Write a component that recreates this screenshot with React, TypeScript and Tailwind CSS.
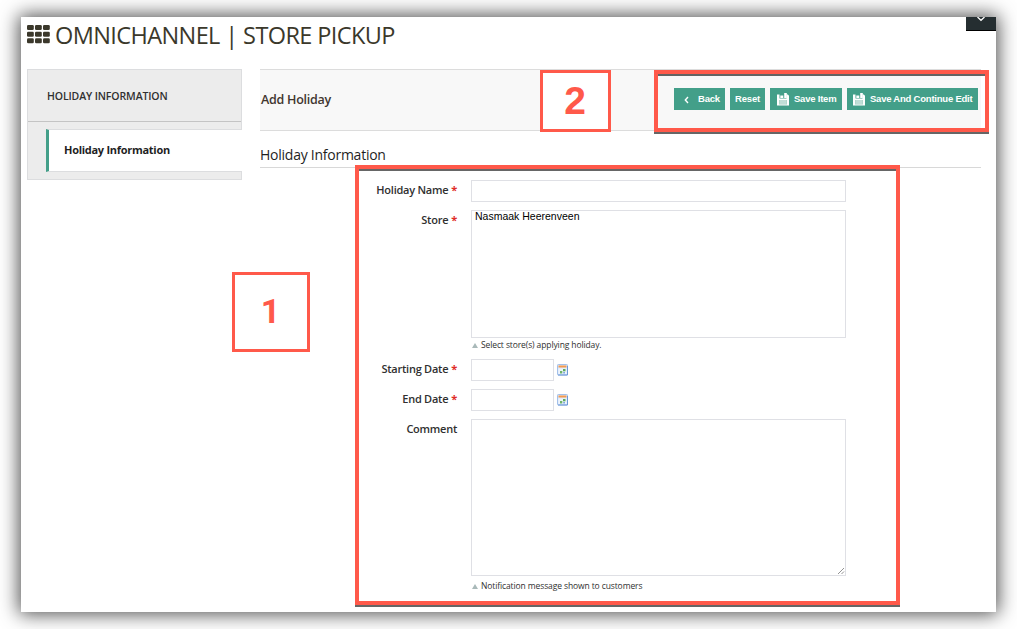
import type { ReactNode } from 'react';

function GridIcon() {
  const cols = [0, 8, 16];
  const rows = [0, 6.7, 13.3];
  return (
    <svg width="23" height="19" viewBox="0 0 23 19" fill="#3b382b">
      {rows.map((y) => cols.map((x) => <rect key={`${x}-${y}`} x={x} y={y} width="6.8" height="5" rx="1.3" />))}
    </svg>
  );
}

function SaveIcon() {
  return (
    <svg width="12" height="13" viewBox="0 0 12 13" className="mt-px shrink-0">
      <path d="M0 1.500h2.500v4h7v-4h1.300L12 2.700V12.500H0z" fill="#fff" />
      <path d="M3.300 2.500h3v2.500h-3zM7.200 0h2.600v5H7.200z" fill="#fff" />
      <path d="M2 7h8v4.500H2z" fill="#a3cfc3" />
      <path d="M2.500 8h7M2.500 10h7" stroke="#e4f2ee" strokeWidth=".9" />
    </svg>
  );
}

function CalendarIcon() {
  return (
    <svg width="11" height="12" viewBox="0 0 11 12" className="shrink-0">
      <rect x=".5" y=".5" width="10" height="10.500" rx=".8" fill="#dce8f8" stroke="#a3c0ea" />
      <path d="M1 11h9.500V2" stroke="#6c98d6" fill="none" />
      <rect x="1.500" y="1.500" width="8" height="2" fill="#f69a4d" />
      <rect x="1.500" y="4.500" width="8" height="5.500" fill="#eef4fc" />
      <rect x="3" y="7" width="2.300" height="2.500" fill="#6fb36b" />
      <rect x="6" y="5" width="2.500" height="2.300" fill="#5daa5d" />
      <rect x="6.200" y="8" width="1.800" height="1.500" fill="#7ea6dc" />
    </svg>
  );
}

function Button({ children, className }: { children: ReactNode; className: string }) {
  return (
    <button
      className={`flex h-[22px] shrink-0 items-center bg-[#439f89] font-['Liberation_Sans',sans-serif] text-[9.5px] font-bold whitespace-nowrap text-white ${className}`}
    >
      {children}
    </button>
  );
}

function Label({ children, required }: { children: ReactNode; required?: boolean }) {
  return (
    <div className="w-[197px] shrink-0 pt-[2px] text-right text-[11px] leading-[15px] font-semibold tracking-[-0.25px] text-[#303030]">
      {children}
      {required && <span className="ml-[3px] font-bold text-[#e02b27]">*</span>}
    </div>
  );
}

function Hint({ children }: { children: ReactNode }) {
  return (
    <div className="flex h-[13px] items-center pl-px text-[8.5px] tracking-[-0.11px] text-[#303030]">
      <svg width="6" height="5" viewBox="0 0 6 5" className="mr-[3px]">
        <path d="M3 0l3 5H0z" fill="#a9b9b9" />
      </svg>
      {children}
    </div>
  );
}

const field = 'border border-[#dfe0e5] bg-white';

export default function App() {
  return (
    <div className="h-[629px] w-[1017px] overflow-hidden bg-white px-[21px] pt-[17px] font-['Open_Sans',sans-serif]">
      <div className="relative h-[595px] w-[975px] bg-white shadow-[0_0_18px_2px_rgba(0,0,0,0.7)]">
        <header className="flex h-[52px] items-start pl-[6px]">
          <div className="pt-[8px]">
            <GridIcon />
          </div>
          <h1 className="ml-[5px] pt-[2px] text-[23.5px] leading-[32px] tracking-[-0.6px] whitespace-nowrap text-[#3b382b]">
            OMNICHANNEL | STORE PICKUP
          </h1>
          <div className="ml-auto flex h-[14px] w-[30px] justify-center border-b border-black bg-[#252e31]">
            <svg width="10" height="5" viewBox="0 0 10 5">
              <path d="M1.500 0L5 3.300 8.500 0" fill="none" stroke="#fff" strokeWidth="1.300" />
            </svg>
          </div>
        </header>

        <div className="flex items-start pl-[6px]">
          <aside className="h-[111px] w-[215px] border border-[#dcdddf] bg-[#ececec]">
            <h2 className="flex h-[52px] items-center border-b border-[#c4c4c4] pt-[2px] pl-[19px] text-[10.500px] font-semibold tracking-[-0.12px] text-[#303030]">
              HOLIDAY INFORMATION
            </h2>
            <div className="mt-[7px] -mr-px ml-[18px] flex h-[43px] items-center border-y border-l-[3px] border-y-[#dcdddf] border-l-[#439f89] bg-white pl-[15px] text-[11px] font-bold tracking-[-0.28px] text-[#1f1f1f]">
              Holiday Information
            </div>
          </aside>

          <main className="ml-[18px] w-[721px]">
            <div className="flex h-[62px] items-center border-y border-[#dcdcdc] bg-[#f8f8f8] pr-[3px] pl-[1px]">
              <span className="text-[12.500px] font-semibold tracking-[-0.25px] text-[#41362f]">Add Holiday</span>
              <div className="ml-auto flex gap-[5px] pb-[2px]">
                <Button className="w-[51px] pl-[10px]">
                  <svg width="5" height="8" viewBox="0 0 5 8" className="mt-px mr-[9px]">
                    <path d="M4 1L1.300 4 4 7" fill="none" stroke="#fff" strokeWidth="1.400" />
                  </svg>
                  <span className="tracking-[-0.2px]">Back</span>
                </Button>
                <Button className="w-[35px] justify-center tracking-[-0.2px]">Reset</Button>
                <Button className="w-[72px] gap-[5px] pl-[7px] tracking-[-0.22px]">
                  <SaveIcon />
                  Save Item
                </Button>
                <Button className="w-[131px] gap-[5px] pl-[6px] tracking-[-0.22px]">
                  <SaveIcon />
                  Save And Continue Edit
                </Button>
              </div>
            </div>

            <h3 className="mt-[14px] h-[23px] border-b border-[#d8d8d8] text-[14px] leading-[20px] tracking-[-0.25px] text-[#1f1f1f]">
              Holiday Information
            </h3>

            <form className="pt-[12px]">
              <div className="flex h-[30px]">
                <Label required>Holiday Name</Label>
                <div className={`ml-[14px] h-[22px] w-[375px] ${field}`} />
              </div>
              <div className="flex h-[149px]">
                <Label required>Store</Label>
                <div className="ml-[14px] w-[375px]">
                  <div className={`h-[128px] pl-[3px] font-['Liberation_Sans',sans-serif] text-[10.500px] leading-[11px] text-black ${field}`}>
                    Nasmaak Heerenveen
                  </div>
                  <div className="pt-px">
                    <Hint>Select store(s) applying holiday.</Hint>
                  </div>
                </div>
              </div>
              <div className="flex h-[30px]">
                <Label required>Starting Date</Label>
                <div className={`mr-[3px] ml-[14px] h-[22px] w-[83px] ${field}`} />
                <div className="pt-[5px]">
                  <CalendarIcon />
                </div>
              </div>
              <div className="flex h-[30px]">
                <Label required>End Date</Label>
                <div className={`mr-[3px] ml-[14px] h-[22px] w-[83px] ${field}`} />
                <div className="pt-[5px]">
                  <CalendarIcon />
                </div>
              </div>
              <div className="flex">
                <Label>Comment</Label>
                <div className="ml-[14px] w-[375px]">
                  <div className={`flex h-[157px] items-end justify-end ${field}`}>
                    <svg width="8" height="8" viewBox="0 0 8 8">
                      <path d="M1 7L7 1M4.500 7L7 4.500" stroke="#777" strokeWidth=".8" />
                    </svg>
                  </div>
                  <div className="pt-[4px]">
                    <Hint>Notification message shown to customers</Hint>
                  </div>
                </div>
              </div>
            </form>
          </main>
        </div>

        <div className="pointer-events-none absolute top-[148px] left-[334px] h-[440px] w-[545px] border-4 border-[#ff594a] drop-shadow-[0_2px_0.500px_rgba(0,0,0,0.6)]" />
        <div className="pointer-events-none absolute top-[53px] left-[633px] h-[62px] w-[335px] border-4 border-[#ff594a] drop-shadow-[0_2px_0.500px_rgba(0,0,0,0.6)]" />
        <div className="absolute top-[53px] left-[519px] flex h-[62px] w-[71px] items-center justify-center border-[3px] border-[#ff594a] bg-white pr-px font-['Liberation_Sans',sans-serif] text-[39px] font-bold text-[#ff594a]">
          2
        </div>
        <div className="absolute top-[255px] left-[211px] flex h-[80px] w-[78px] items-center justify-center border-[3px] border-[#ff594a] bg-white pr-px pb-[2px] font-['Roboto',sans-serif] text-[34px] font-bold text-[#ff594a]">
          1
        </div>
      </div>
    </div>
  );
}
